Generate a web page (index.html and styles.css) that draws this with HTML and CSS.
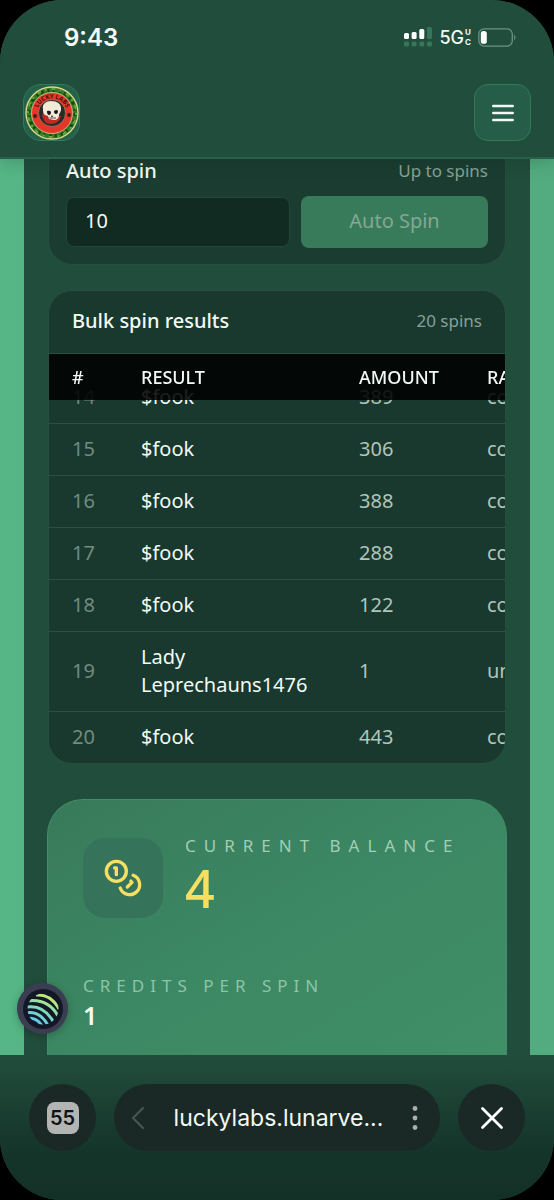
FILE: index.html
```html
<!DOCTYPE html>
<html lang="en">
<head>
<meta charset="utf-8">
<meta name="viewport" content="width=device-width, initial-scale=1">
<title>Lucky Labs</title>
<link rel="stylesheet" href="styles.css">
</head>
<body>
<div class="screen">
  <header class="top">
    <div class="status">
      <span class="clock">9:43</span>
      <div class="status-right">
        <svg class="signal" width="28" height="20" viewBox="0 0 28 20" aria-hidden="true">
          <g fill="#fff"><rect x="0" y="6" width="5" height="6" rx="1.5"/><rect x="7.600" y="5" width="5" height="7" rx="1.500"/><rect x="15.300" y="2" width="5" height="10" rx="1.500"/></g>
          <g fill="#37765a"><rect x="23" y="0" width="5" height="12" rx="1.500"/><rect x="0" y="14.500" width="5" height="5" rx="1.500"/><rect x="7.600" y="14.500" width="5" height="5" rx="1.500"/><rect x="15.300" y="14.500" width="5" height="5" rx="1.500"/><rect x="23" y="14.500" width="5" height="5" rx="1.500"/></g>
        </svg>
        <span class="network">5G<span class="uc"><span>U</span><span>C</span></span></span>
        <svg width="39" height="19" viewBox="0 0 39 19" aria-hidden="true">
          <rect x="0.800" y="0.800" width="33.500" height="17.400" rx="5.500" fill="none" stroke="#6d9281" stroke-width="1.300"/>
          <rect x="2.800" y="3" width="6" height="12.800" rx="2.600" fill="#fff"/>
          <path d="M36.300 6.500q2.200 3 0 6z" fill="#7d9f8f"/>
        </svg>
      </div>
    </div>
    <div class="nav">
      <a class="logo" href="#" aria-label="Lucky Labs home">
        <svg width="54" height="54" viewBox="0 0 54 54">
          <defs><path id="ring" d="M12 30a15.200 15.200 0 1 1 30 0"/></defs>
          <circle cx="27" cy="27" r="26" fill="#347a28" stroke="#d9d48c" stroke-width="1.400"/>
          <circle cx="27" cy="27" r="23" fill="none" stroke="#1b4518" stroke-width="3" stroke-dasharray="3 4 2 3"/>
          <circle cx="27" cy="27" r="24" fill="none" stroke="#68a63c" stroke-width="2" stroke-dasharray="2 5 4 4"/>
          <circle cx="27" cy="27" r="20.500" fill="#e5362a" stroke="#d9c88c" stroke-width="0.800"/>
          <circle cx="27" cy="27" r="13.500" fill="#292b2b" stroke="#bd8d66" stroke-width="0.600"/>
          <path d="M17 28q1 10 9 10t10-8z" fill="#be2b22"/>
          <path d="M18 23c-1-5 3-8 8-8 6 0 11 3 10 9-.3 2-2 4-2 5 0 3-2 5-5 5l-5-1-1-3-3-1c-2-1-2-3-2-6z" fill="#f1ead7"/>
          <path d="M22 25q3-1 4 1 0 3-2 3t-2-4zm7 0q3-2 4 0 0 3-2 3t-2-3zm-2 4l1 2h-2z" fill="#171b1a"/>
          <path d="M24 32h7M26 31v2m2-2v2m2-2v2" stroke="#5b514b" stroke-width=".600"/>
          <circle cx="10" cy="30" r="1.900" fill="#451b16"/><circle cx="44" cy="29" r="1.900" fill="#451b16"/>
          <text class="logo-text"><textPath href="#ring" startOffset="50%" text-anchor="middle">LUCKY LABS</textPath></text>
        </svg>
      </a>
      <button class="menu" type="button" aria-label="Open menu">
        <svg width="24" height="20" viewBox="0 0 24 20" stroke="#f2f8f5" stroke-width="2.600" stroke-linecap="round"><path d="M2.300 3h19.400M2.300 10h19.400M2.300 17h19.400"/></svg>
      </button>
    </div>
  </header>

  <main class="page">
    <div class="panel">
      <section class="auto">
        <div class="auto-head"><label class="title" for="spins">Auto spin</label><span class="hint">Up to spins</span></div>
        <div class="auto-form">
          <input id="spins" class="count" type="text" inputmode="numeric" value="10">
          <button class="spin" type="button" disabled>Auto Spin</button>
        </div>
      </section>

      <section class="results">
        <div class="results-head"><h2 class="title">Bulk spin results</h2><span class="hint">20 spins</span></div>
        <div class="scroller" id="results">
          <table>
            <colgroup><col class="c-num"><col class="c-result"><col class="c-amount"><col class="c-rarity"></colgroup>
            <thead><tr><th>#</th><th>RESULT</th><th>AMOUNT</th><th>RARITY</th></tr></thead>
            <tbody>
              <tr><td>14</td><td>$fook</td><td>389</td><td>common</td></tr>
              <tr><td>15</td><td>$fook</td><td>306</td><td>common</td></tr>
              <tr><td>16</td><td>$fook</td><td>388</td><td>common</td></tr>
              <tr><td>17</td><td>$fook</td><td>288</td><td>common</td></tr>
              <tr><td>18</td><td>$fook</td><td>122</td><td>common</td></tr>
              <tr><td>19</td><td>Lady Leprechauns1476</td><td>1</td><td>unique</td></tr>
              <tr><td>20</td><td>$fook</td><td>443</td><td>common</td></tr>
            </tbody>
          </table>
        </div>
      </section>

      <section class="balance">
        <div class="balance-row">
          <div class="coin-box">
            <svg width="40" height="40" viewBox="0 0 24 24" fill="none" stroke="#f7df63" stroke-width="2" stroke-linecap="round" stroke-linejoin="round" aria-hidden="true"><circle cx="8" cy="8" r="6"/><path d="M18.090 10.370A6 6 0 1 1 10.340 18"/><path d="M7 6h1v4"/><path d="m16.710 13.880.7.710-2.820 2.820"/></svg>
          </div>
          <div class="stat"><span class="caps wide">CURRENT BALANCE</span><span class="big">4</span></div>
        </div>
        <div class="stat"><span class="caps">CREDITS PER SPIN</span><span class="small">1</span></div>
      </section>
    </div>
    <button class="wallet" type="button" aria-label="Wallet">
      <svg width="40" height="40" viewBox="0 0 40 40" fill="none">
        <defs>
          <linearGradient id="jup" gradientUnits="userSpaceOnUse" x1="12" y1="36" x2="28" y2="4"><stop offset="0" stop-color="#58c4f5"/><stop offset=".5" stop-color="#83deb8"/><stop offset="1" stop-color="#d6ef58"/></linearGradient>
          <clipPath id="disc"><circle cx="20" cy="20" r="15.500"/></clipPath>
        </defs>
        <circle cx="20" cy="20" r="20" fill="#141726"/>
        <g clip-path="url(#disc)" stroke="url(#jup)" stroke-width="3">
          <path d="M13 6Q28 5 36 20"/><path d="M4 12Q25 9 35 27"/><path d="M3 18.200Q21 15 31 34"/><path d="M3 24Q17 21 26 38"/><path d="M4 29.500Q14 28 20 38"/>
        </g>
      </svg>
    </button>
  </main>

  <footer class="browser">
    <button class="round" type="button" aria-label="55 open tabs"><span class="tabs">55</span></button>
    <div class="address">
      <button class="plain" type="button" aria-label="Back"><svg width="14" height="24" viewBox="0 0 14 24" fill="none" stroke="#48564f" stroke-width="2.200" stroke-linecap="round" stroke-linejoin="round"><path d="M12 2L2 12l10 10"/></svg></button>
      <a class="url" href="#">luckylabs.lunarve...</a>
      <button class="plain" type="button" aria-label="More"><svg width="6" height="24" viewBox="0 0 6 24" fill="#a9b1ae"><circle cx="3" cy="2.500" r="2.400"/><circle cx="3" cy="12" r="2.400"/><circle cx="3" cy="21.500" r="2.400"/></svg></button>
    </div>
    <button class="round" type="button" aria-label="Close"><svg width="24" height="24" viewBox="0 0 24 24" stroke="#fff" stroke-width="2.800" stroke-linecap="round"><path d="M2.500 2.500l19 19M21.500 2.500l-19 19"/></svg></button>
  </footer>
</div>
<script src="app.js"></script>
</body>
</html>
```
FILE: styles.css
```css
* { box-sizing: border-box; }
body { margin: 0; background: #000; font-family: "Noto Sans", "Open Sans", sans-serif; color: #f3faf6; }
button, input { font: inherit; color: inherit; margin: 0; }
button { border: 0; padding: 0; display: flex; align-items: center; justify-content: center; }
svg { display: block; }
a { color: inherit; text-decoration: none; }

.screen { min-height: 100vh; display: flex; flex-direction: column; border-radius: 62px; overflow: hidden; background: #214d3c; }

.top { position: relative; z-index: 2; background: #214d3c; border-bottom: 2px solid #28604a; box-shadow: 0 2px 16px rgba(10, 40, 28, .25); padding-bottom: 16px; }
.status { height: 84px; padding: 0 37px 10px 64px; display: flex; align-items: center; justify-content: space-between; font-family: Inter, "Liberation Sans", sans-serif; }
.clock { font-size: 24px; font-weight: 600; }
.status-right { display: flex; align-items: center; gap: 7px; }
.network { display: flex; align-items: center; gap: 1px; font-size: 18px; font-weight: 500; }
.uc { display: flex; flex-direction: column; font-size: 8px; line-height: 10px; font-weight: 700; }
.nav { display: flex; justify-content: space-between; padding: 0 23px; }
.logo, .menu { width: 57px; height: 57px; border: 1px solid #34795a; border-radius: 14px; background: #265d48; display: flex; align-items: center; justify-content: center; }
.logo { background: #236149; border-radius: 18px; }
.logo-text { font: 700 6px "Noto Sans", sans-serif; fill: #3f130f; }

.page { position: relative; flex: 1; display: flex; background: linear-gradient(90deg, #56b686, #52ac7f); padding: 0 24px; }
.panel { flex: 1; min-width: 0; display: flex; flex-direction: column; background: #214d3c; padding: 0 24px; }

.title { margin: 0; font-size: 20px; line-height: 24px; font-weight: 500; }
.hint { font-size: 17px; line-height: 24px; color: #86a196; }

.auto { background: #1b3d31; border: 1px solid #274f40; border-top: 0; border-radius: 0 0 24px 24px; padding: 0 17px 16px; margin-bottom: 25px; }
.auto-head { display: flex; justify-content: space-between; margin-bottom: 13px; }
.auto-form { display: grid; grid-template-columns: 224px 1fr; gap: 11px; align-items: center; }
.count { width: 100%; min-width: 0; height: 50px; padding: 0 18px 3px; background: #112a22; border: 1px solid #21483a; border-radius: 8px; font-size: 20px; }
.spin { height: 52px; padding-bottom: 3px; border-radius: 8px; background: #387b5a; color: #85a795; font-size: 20px; }

.results { background: #19382e; border: 1px solid #274f40; border-radius: 24px; overflow: hidden; margin-bottom: 35px; }
.results-head { display: flex; align-items: center; justify-content: space-between; padding: 18px 23px 20px; border-bottom: 1px solid #2a5041; }
.scroller { max-height: 409px; overflow: auto; scrollbar-width: none; }
table { width: 600px; table-layout: fixed; border-collapse: separate; border-spacing: 0; font-size: 20px; line-height: 28px; }
.c-num { width: 69px; }
.c-result { width: 218px; }
.c-amount { width: 128px; }
th { position: sticky; top: 0; background: rgba(0, 0, 0, .88); font-size: 18px; line-height: 24px; font-weight: 500; text-align: left; padding: 11px 23px; }
th, td { white-space: nowrap; }
td { padding: 11px 23px 12px; border-top: 1px solid #2b5041; color: #b0c5bb; }
td:first-child { color: #718b80; }
td:nth-child(2) { color: #f3faf6; white-space: normal; padding-right: 20px; }

.balance { flex: 1; display: flex; flex-direction: column; gap: 56px; margin: 0 -1px; padding: 38px 35px 14px; border: 1px solid #438d68; border-bottom: 0; border-radius: 36px 36px 0 0; background: linear-gradient(150deg, #387a5a, #3c8864 50%, #408f67); }
.balance-row { display: flex; gap: 22px; }
.coin-box { width: 80px; height: 80px; border-radius: 22px; background: #35745a; display: flex; align-items: center; justify-content: center; }
.stat { display: flex; flex-direction: column; }
.caps { font-size: 17px; line-height: 16px; letter-spacing: 6px; color: #8cc5a7; white-space: nowrap; }
.wide { letter-spacing: 8px; color: #a1ceb7; }
.big { font-size: 52px; line-height: 68px; font-weight: 500; color: #f7df63; }
.small { font-size: 25px; line-height: 42px; font-weight: 600; }

.wallet { position: absolute; left: 17px; bottom: 21px; width: 51px; height: 51px; border-radius: 50%; background: #3b3d50; box-shadow: 0 2px 8px rgba(0, 0, 0, .25); }

.browser { display: flex; gap: 18px; padding: 29px 29px 49px; background: linear-gradient(#214d3c, #15352a 66%, #133027); font-family: Inter, "Liberation Sans", sans-serif; }
.round { width: 67px; height: 67px; border-radius: 50%; background: #1a2925; flex: none; }
.tabs { width: 32px; height: 32px; border-radius: 8px; background: #b3b5b4; color: #101413; font-size: 20px; line-height: 32px; font-weight: 600; }
.address { flex: 1; min-width: 0; height: 67px; border-radius: 34px; background: #1a2925; display: flex; align-items: center; justify-content: space-between; padding: 0 22px 0 17px; }
.plain { background: none; }
.url { font-size: 23px; }
```
FILE: app.js
```js
// Keep the latest spin in view under the sticky table header.
const results = document.getElementById("results");
results.scrollTop = results.scrollHeight;
```
